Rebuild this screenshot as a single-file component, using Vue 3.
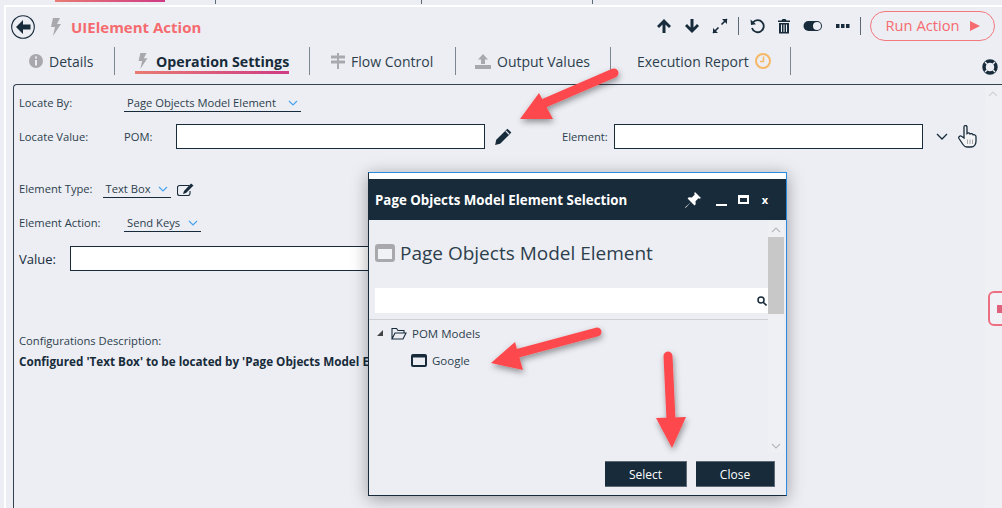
<template>
  <div class="page">
    <div class="top-strip">
      <div class="strip-active"></div>
      <div class="strip-sep s1"></div>
      <div class="strip-sep s2"></div>
      <div class="strip-sep s3"></div>
    </div>

    <div class="main">
      <header class="head">
        <button class="back" aria-label="Back">
          <svg width="24" height="24" viewBox="0 0 24 24">
            <circle cx="12" cy="12" r="11.3" fill="none" stroke="#172b3a" stroke-width="1.1" />
            <path d="M5 12l7-7v4.500h7.500v5H12V19z" fill="#172b3a" />
          </svg>
        </button>
        <svg class="bolt-head" width="12" height="18" viewBox="0 0 12 18">
          <path d="M3 0h7L7 6h4L3 18l2-9H1z" fill="#a9a9ad" />
        </svg>
        <h1 class="title">UIElement Action</h1>
        <div class="tools">
          <svg width="16" height="16" viewBox="0 0 16 16"><path d="M8 1l7 7-2 2-3.500-3.500V15h-3V6.500L3 10 1 8z" fill="#172b3a" /></svg>
          <svg width="16" height="16" viewBox="0 0 16 16"><path d="M8 15L1 8l2-2 3.500 3.500V1h3v8.500L13 6l2 2z" fill="#172b3a" /></svg>
          <svg width="16" height="16" viewBox="0 0 16 16"><path d="M1 15l5.500-5.500M15 1L9.500 6.500" stroke="#172b3a" stroke-width="1.600" /><path d="M1 10v5h5zM15 6V1h-5z" fill="#172b3a" /></svg>
          <span class="tool-sep"></span>
          <svg width="16" height="16" viewBox="0 0 16 16"><path d="M4 4.500A6 6 0 1 1 3 10" fill="none" stroke="#172b3a" stroke-width="1.800" /><path d="M1.500 1.500l.5 5.500 5-.8z" fill="#172b3a" /></svg>
          <svg width="14" height="16" viewBox="0 0 14 16"><path d="M1 2.500h12v1.500H1zM4.500 2.500L5.500 1h3l1 1.500zM2 5h10v10.500H2z" fill="#172b3a" /><path d="M4.500 6.500v7.500M7 6.500v7.500M9.500 6.500v7.500" stroke="#eceef4" /></svg>
          <svg width="20" height="12" viewBox="0 0 20 12"><rect x=".5" y="1" width="18.500" height="10" rx="5" fill="#172b3a" /><circle cx="14" cy="6" r="4" fill="#eceef4" /></svg>
          <svg class="dots" width="14" height="4" viewBox="0 0 14 4"><path d="M0 0h3.500v4H0zM5 0h3.500v4H5zM10 0h3.500v4H10z" fill="#172b3a" /></svg>
          <span class="tool-sep"></span>
          <button class="run">Run Action <i class="play"></i></button>
        </div>
      </header>

      <nav class="tabs">
        <div class="tab details">
          <svg width="14" height="14" viewBox="0 0 14 14"><circle cx="7" cy="7" r="7" fill="#a9a9ad" /><path d="M6 6h2v5.500H6zM6 2.600h2v2H6z" fill="#eceef4" /></svg>
          <span>Details</span>
        </div>
        <div class="tab op active">
          <svg width="12" height="16" viewBox="0 0 12 18"><path d="M3 0h7L7 6h4L3 18l2-9H1z" fill="#a9a9ad" /></svg>
          <span>Operation Settings</span>
        </div>
        <div class="tab flow">
          <svg width="16" height="16" viewBox="0 0 16 16"><path d="M7 0h2v16H7zM1 2.500h14v3H1zM1 7.500h14v3H1z" fill="#a9a9ad" /></svg>
          <span>Flow Control</span>
        </div>
        <div class="tab output">
          <svg width="16" height="15" viewBox="0 0 16 15"><path d="M8 0l5 5.500h-3V10H6V5.500H3zM0 11h16v4H0z" fill="#a9a9ad" /></svg>
          <span>Output Values</span>
        </div>
        <div class="tab report">
          <span>Execution Report</span>
          <svg width="16" height="16" viewBox="0 0 16 16"><circle cx="8" cy="8" r="7" fill="none" stroke="#f6b865" stroke-width="2" /><path d="M8.500 3.500v5H5" fill="none" stroke="#f6b865" stroke-width="1.500" /></svg>
        </div>
        <svg class="buoy" width="16" height="16" viewBox="0 0 16 16">
          <circle cx="8" cy="8" r="6" fill="none" stroke="#172b3a" stroke-width="3.500" />
          <path d="M3 3l3 3M13 3l-3 3M3 13l3-3M13 13l-3-3" stroke="#eceef4" stroke-width="1.400" />
        </svg>
      </nav>

      <section class="panel">
        <div class="form">
          <div class="row locate-by">
            <label class="lbl w-label">Locate By:</label>
            <div class="select sel-locate">
              <span>Page Objects Model Element</span>
              <svg class="chev" width="10" height="6" viewBox="0 0 10 6"><path d="M1 1l4 4 4-4" fill="none" stroke="#4aa3f0" stroke-width="1.200" /></svg>
            </div>
          </div>

          <div class="row locate-value">
            <label class="lbl w-label">Locate Value:</label>
            <label class="lbl w-pom">POM:</label>
            <div class="input pom-input"></div>
            <svg class="pencil" width="19" height="19" viewBox="0 0 17 17"><path d="M12 1.500l3.500 3.500L5.500 15 1 16l1-4.500z" fill="#172b3a" /><path d="M10.500 3.500l3 3" stroke="#eceef4" /></svg>
            <label class="lbl el-label">Element:</label>
            <div class="input el-input"></div>
            <svg class="el-chev" width="12" height="7" viewBox="0 0 12 7"><path d="M1 1l5 5 5-5" fill="none" stroke="#172b3a" stroke-width="1.300" /></svg>
            <svg class="hand" width="19" height="23" viewBox="0 0 19 23">
              <path d="M6 2c0-2 3-2 3 0v6.500c1-1 2.500-.6 3 .5 1-.7 2.500-.3 3 .8 1.200-.4 3 .2 3 2V16c0 3.500-2 6-5 6H9c-2 0-3-1-4-2.500L1 13.500c-.9-1.600.9-3.200 2.500-2.200L6 13z" fill="#f4f4f6" stroke="#172b3a" stroke-width="1.300" />
              <path d="M9.500 14.500v4.500M12 14.500v4.500M14.500 14.500v4.500" stroke="#a9a9ad" />
            </svg>
          </div>

          <div class="row el-type">
            <label class="lbl">Element Type:</label>
            <div class="select sel-type">
              <span>Text Box</span>
              <svg class="chev" width="10" height="6" viewBox="0 0 10 6"><path d="M1 1l4 4 4-4" fill="none" stroke="#4aa3f0" stroke-width="1.200" /></svg>
            </div>
            <svg class="edit" width="17" height="13" viewBox="0 0 17 13"><path d="M12 2.500H2.500a2 2 0 0 0-2 2v6a2 2 0 0 0 2 2H11a2 2 0 0 0 2-2V8" fill="none" stroke="#172b3a" stroke-width="1.100" /><path d="M14 .5l2.500 2L9 10l-3 1 1-3z" fill="#172b3a" /></svg>
          </div>

          <div class="row el-action">
            <label class="lbl w-label">Element Action:</label>
            <div class="select sel-action">
              <span>Send Keys</span>
              <svg class="chev" width="10" height="6" viewBox="0 0 10 6"><path d="M1 1l4 4 4-4" fill="none" stroke="#4aa3f0" stroke-width="1.200" /></svg>
            </div>
          </div>

          <div class="row value-row">
            <label class="lbl-big">Value:</label>
            <div class="input value-input"></div>
          </div>

          <p class="cfg-title">Configurations Description:</p>
          <p class="cfg-text">Configured 'Text Box' to be located by 'Page Objects Model Element'</p>
        </div>
        <div class="scroll-side">
          <svg class="scroll-up" width="10" height="6" viewBox="0 0 10 6"><path d="M1 5l4-4 4 4" fill="none" stroke="#d3d3d6" stroke-width="1.200" /></svg>
        </div>
      </section>
    </div>

    <div class="side-tab"><i></i></div>

    <div class="dialog">
      <div class="dlg-cap">
        <span class="dlg-title">Page Objects Model Element Selection</span>
        <svg class="cap-pin" width="16" height="16" viewBox="0 0 16 16"><path d="M10 0l6 6-1.500.8-1-.6-3 3 .2 3-1.200 1.200L6 10 1 15.500 0 16l.5-1L6 10 2.600 6.500 3.800 5.300l3 .2 3-3-.6-1z" fill="#fff" /></svg>
        <span class="cap-min"></span>
        <span class="cap-max"></span>
        <span class="cap-x">x</span>
      </div>
      <div class="dlg-body">
        <div class="dlg-main">
          <div class="dlg-heading">
            <svg width="20" height="18" viewBox="0 0 20 18"><rect x="1.500" y="1.500" width="17" height="15" rx="1.500" fill="#f1f2f6" stroke="#a9a9ad" stroke-width="3" /><path d="M1 2h18v3H1z" fill="#a9a9ad" /></svg>
            <span>Page Objects Model Element</span>
          </div>
          <div class="search">
            <svg width="10" height="10" viewBox="0 0 10 10"><circle cx="4" cy="4" r="3" fill="none" stroke="#172b3a" stroke-width="1.500" /><path d="M6.200 6.200L9.500 9.500" stroke="#172b3a" stroke-width="1.600" /></svg>
          </div>
          <div class="dlg-sep"></div>
          <div class="tree-row">
            <i class="tree-arrow"></i>
            <svg width="16" height="13" viewBox="0 0 16 13"><path d="M1 12V1.500h4.500l1.500 2h6V6M1 12l3-6h11l-3 6z" fill="none" stroke="#172b3a" stroke-width="1.100" /></svg>
            <span>POM Models</span>
          </div>
          <div class="tree-row child">
            <svg width="16" height="13" viewBox="0 0 16 13"><rect x="1" y="1" width="14" height="11" rx="1" fill="#eceef4" stroke="#172b3a" stroke-width="2" /><path d="M1 1.500h14v2H1z" fill="#172b3a" /></svg>
            <span>Google</span>
          </div>
        </div>
        <div class="dlg-scroll">
          <svg width="10" height="6" viewBox="0 0 10 6"><path d="M1 5l4-4 4 4" fill="none" stroke="#b9b9bc" stroke-width="1.200" /></svg>
          <div class="thumb"></div>
          <svg class="dn" width="10" height="6" viewBox="0 0 10 6"><path d="M1 1l4 4 4-4" fill="none" stroke="#b9b9bc" stroke-width="1.200" /></svg>
        </div>
        <div class="dlg-foot">
          <button class="btn btn-select">Select</button>
          <button class="btn btn-close">Close</button>
        </div>
      </div>
    </div>

    <svg class="arrows" width="1002" height="508" viewBox="0 0 1002 508">
      <defs>
        <filter id="arrow-shadow" x="-30%" y="-30%" width="160%" height="160%">
          <feDropShadow dx="1" dy="3" stdDeviation="3" flood-color="#000" flood-opacity=".4" />
        </filter>
      </defs>
      <g v-for="a in arrows" :key="a.id" filter="url(#arrow-shadow)">
        <path :d="a.line" fill="none" stroke="#fd4a4d" stroke-width="9" stroke-linecap="round" />
        <path :d="a.head" fill="#fd4a4d" />
      </g>
    </svg>
  </div>
</template>

<script setup>
const arrows = [
  { id: 1, line: "M614 73L540 105", head: "M520 119L539 93L553 119z" },
  { id: 2, line: "M597 332L515 354", head: "M491 363L515 342L523 370z" },
  { id: 3, line: "M668 356L671 420", head: "M672 448L656 418L686 417z" },
];
</script>

<style>
html,
body {
  margin: 0;
  background: #eceef4;
}
</style>

<style scoped>
* {
  box-sizing: border-box;
}

.page {
  position: relative;
  width: 1002px;
  height: 508px;
  overflow: hidden;
  background: #eceef4;
  color: #172b3a;
  font-family: "Open Sans", "Noto Sans", sans-serif;
}

.top-strip {
  position: relative;
  height: 5px;
}

.strip-active {
  position: absolute;
  left: 55px;
  top: 0;
  width: 110px;
  height: 2px;
  background: linear-gradient(90deg, #e87b72, #cf3a85);
}

.strip-sep {
  position: absolute;
  top: 0;
  width: 1px;
  height: 4px;
  background: #5d6a75;
}

.s1 { left: 215px; }
.s2 { left: 421px; }
.s3 { left: 592px; }

.main {
  margin-left: 4px;
  height: 503px;
  padding-left: 1px;
  border-top: 2px solid #fff;
  border-left: 2px solid #fff;
}

.head {
  display: flex;
  align-items: center;
  height: 40px;
  padding-left: 5px;
  margin-left: -1px;
}

.back {
  display: flex;
  padding: 0;
  border: 0;
  background: none;
}

.bolt-head {
  margin-left: 15px;
}

.title {
  margin: 0 0 0 9px;
  font-size: 15px;
  font-weight: 700;
  color: #f56b6f;
}

.tools {
  display: flex;
  align-items: center;
  margin: -2px 7px 0 auto;
  gap: 12px;
}

.dots {
  margin-left: 1px;
}

.tool-sep {
  width: 1px;
  height: 18px;
  margin: 0 -2px;
  background: #5d6a75;
}

.run {
  display: flex;
  align-items: center;
  justify-content: center;
  gap: 10px;
  width: 125px;
  height: 30px;
  padding: 0 0 2px;
  margin-left: -1px;
  border: 1px solid #f2787c;
  border-radius: 15px;
  background: none;
  color: #f56b6f;
  font: 14.7px "Open Sans", sans-serif;
}

.play {
  width: 0;
  height: 0;
  margin-top: 2px;
  border-left: 10px solid #f56b6f;
  border-top: 5px solid transparent;
  border-bottom: 5px solid transparent;
}

.tabs {
  position: relative;
  display: flex;
  align-items: stretch;
  height: 28px;
}

.tab {
  display: flex;
  align-items: center;
  gap: 6px;
  border-right: 1px solid #7d8791;
  font-size: 14px;
  color: #2c3e4c;
}

.details { width: 108px; padding-left: 22px; }
.op { position: relative; width: 195px; padding-left: 22px; gap: 7px; }
.flow { width: 146px; padding-left: 20px; gap: 5px; }
.output { width: 155px; padding-left: 19px; }
.report { width: 180px; padding-left: 26px; }

.active span {
  font-size: 14.2px;
  font-weight: 700;
  color: #172b3a;
}

.active::after {
  content: "";
  position: absolute;
  left: 20px;
  bottom: 1px;
  width: 154px;
  height: 3px;
  background: linear-gradient(90deg, #e87b72, #cf3a85);
}

.buoy {
  position: absolute;
  right: 4px;
  top: 12px;
}

.panel {
  display: flex;
  height: 424px;
  margin: 9px 0 0 6px;
  border-top: 1px solid #33424f;
  border-left: 1px solid #33424f;
  border-top-left-radius: 4px;
}

.form {
  flex: 1;
  padding: 9px 0 0 5px;
}

.scroll-side {
  width: 17px;
  padding: 6px 0 0 3px;
  background: #eff0f4;
}

.scroll-up {
  display: block;
}

.row {
  display: flex;
  align-items: center;
}

.lbl {
  font-size: 11.2px;
  color: #2c3e4c;
}

.locate-by .lbl,
.el-type .lbl,
.el-action .lbl {
  margin-bottom: 2px;
}

.lbl-big {
  width: 51px;
  font-size: 13px;
}

.w-label {
  width: 105px;
}

.w-pom {
  width: 52px;
}

.select {
  display: flex;
  align-items: center;
  justify-content: space-between;
  height: 18px;
  padding: 0 3px;
  border-bottom: 1px solid #172b3a;
  font-size: 11.2px;
  color: #2c3e4c;
}

.sel-locate { width: 177px; }
.sel-type { width: 68px; margin-left: 10px; }
.sel-action { width: 77px; }

.input {
  height: 25px;
  background: #fff;
  border: 1px solid #172b3a;
}

.locate-by {
  height: 18px;
}

.locate-value {
  height: 25px;
  margin-top: 12px;
}

.pom-input { width: 309px; }
.pencil { margin-left: 9px; }
.el-label { margin-left: 49px; width: 52px; }
.el-input { width: 309px; }
.el-chev { margin-left: 13px; }
.hand { margin-left: 10px; }

.el-type {
  height: 18px;
  margin-top: 31px;
}

.edit {
  margin-left: 6px;
}

.el-action {
  height: 18px;
  margin-top: 16px;
}

.value-row {
  height: 25px;
  margin-top: 14px;
}

.value-input {
  width: 340px;
}

.cfg-title {
  margin: 62px 0 0;
  font-size: 11.2px;
  line-height: 16px;
  color: #2c3e4c;
}

.cfg-text {
  margin: 4px 0 0;
  font-size: 11.7px;
  line-height: 16px;
  font-weight: 700;
  white-space: nowrap;
}

.side-tab {
  position: absolute;
  right: -6px;
  top: 291px;
  width: 20px;
  height: 35px;
  padding: 12px 0 0 7px;
  background: #f1f2f6;
  border: 2px solid #ec7082;
  border-radius: 6px;
}

.side-tab i {
  display: block;
  width: 8px;
  height: 8px;
  background: #e0617c;
}

.dialog {
  position: absolute;
  left: 368px;
  top: 172px;
  width: 419px;
  height: 324px;
  padding-top: 6px;
  background: #fff;
  border: 1px solid #172b3a;
  border-top-color: #2a8ae0;
  border-right-color: #2a8ae0;
  box-shadow: 0 3px 16px rgba(0, 0, 0, 0.35);
}

.dlg-cap {
  display: flex;
  align-items: center;
  height: 41px;
  padding: 0 18px 0 6px;
  background: #172b3a;
  color: #fff;
}

.dlg-title {
  flex: 1;
  font-size: 13.3px;
  font-weight: 700;
}

.cap-pin {
  margin-right: 1px;
}

.cap-min {
  width: 11px;
  height: 2px;
  margin: 10px 0 0 14px;
  background: #fff;
}

.cap-max {
  width: 11px;
  height: 9px;
  margin-left: 11px;
  border: 2px solid #fff;
  border-top-width: 3px;
}

.cap-x {
  margin-left: 13px;
  font-size: 11px;
  font-weight: 700;
  line-height: 12px;
}

.dlg-body {
  position: relative;
  height: 275px;
  background: #eceef4;
}

.dlg-main {
  width: 399px;
  padding-top: 23px;
}

.dlg-heading {
  display: flex;
  align-items: center;
  gap: 5px;
  height: 20px;
  padding-left: 6px;
  font-size: 19px;
  white-space: nowrap;
  color: #2c3e4c;
}

.search {
  display: flex;
  align-items: center;
  justify-content: flex-end;
  height: 25px;
  margin: 25px 0 0 6px;
  padding-right: 1px;
  background: #fff;
}

.dlg-sep {
  height: 1px;
  margin: 6px 0 0;
  background: #cfd0d5;
}

.tree-row {
  display: flex;
  align-items: center;
  gap: 5px;
  height: 16px;
  margin: 5px 0 0 8px;
  font-size: 11.5px;
  color: #2c3e4c;
}

.tree-row.child {
  margin: 11px 0 0 42px;
}

.tree-arrow {
  width: 0;
  height: 0;
  margin-right: 3px;
  border-left: 6px solid transparent;
  border-bottom: 6px solid #444;
}

.dlg-scroll {
  position: absolute;
  top: 0;
  right: 2px;
  display: flex;
  flex-direction: column;
  align-items: center;
  width: 16px;
  height: 232px;
  padding-top: 7px;
  background: #eff0f4;
}

.thumb {
  width: 16px;
  height: 77px;
  margin-top: 4px;
  background: #c8c8c8;
}

.dn {
  margin-top: auto;
  margin-bottom: 3px;
}

.dlg-foot {
  position: absolute;
  right: 11px;
  bottom: 8px;
  display: flex;
  gap: 9px;
}

.btn {
  height: 26px;
  padding: 0;
  border: 1px solid #5d6a75;
  border-width: 1px 1px 1px 0;
  background: #172b3a;
  color: #fff;
  font: 12px "Open Sans", sans-serif;
}

.btn-select { width: 82px; }
.btn-close { width: 79px; }

.arrows {
  position: absolute;
  left: 0;
  top: 0;
  pointer-events: none;
}
</style>
